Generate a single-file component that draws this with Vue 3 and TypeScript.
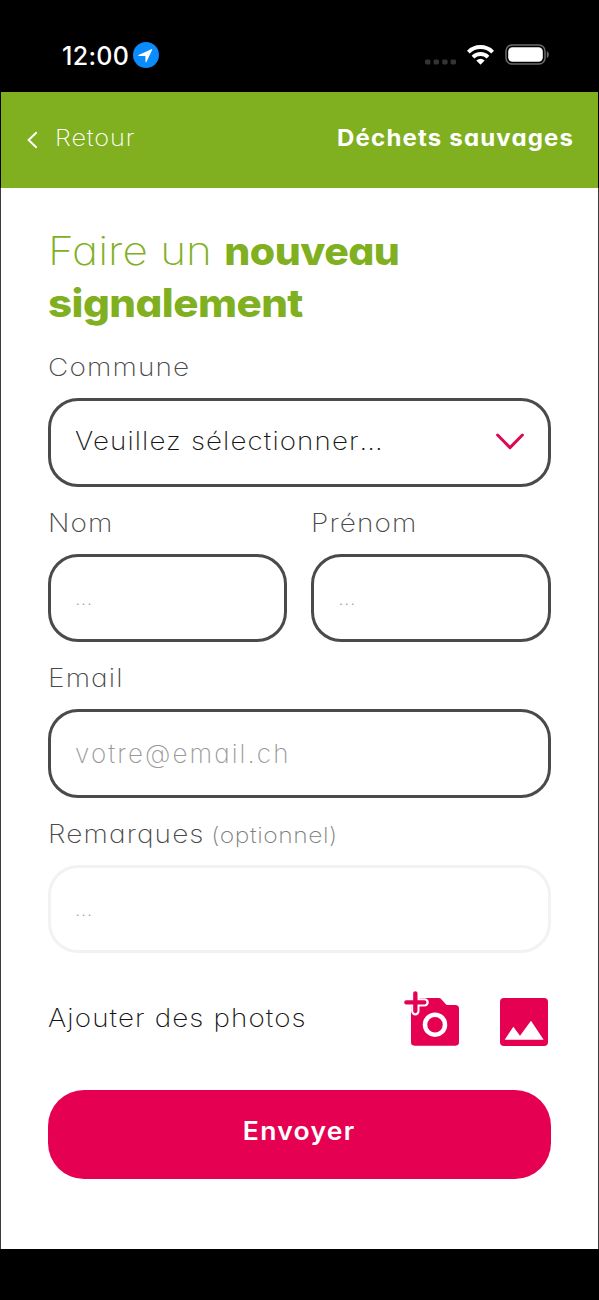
<script setup lang="ts">
import { reactive } from 'vue'

const form = reactive({ lastName: '', firstName: '', email: '', remarks: '' })
</script>

<template>
  <div class="screen">
    <div class="status">
      <span class="time">12:00</span>
      <svg class="location" viewBox="0 0 26 26">
        <circle cx="13" cy="13" r="13" fill="#0a8cff" />
        <path d="M5.6 13.1 L18.4 7.2 Q19.6 6.8 19.1 8 L13.4 20 Q12.7 20.9 12.5 19.8 L12.4 14.1 L6 14 Q4.6 13.7 5.6 13.1Z" fill="#fff" />
      </svg>
      <span class="spacer"></span>
      <svg class="signal" viewBox="0 0 31 6">
        <rect x="0" y=".5" width="5.4" height="5" rx="1.4" />
        <rect x="8.6" y=".5" width="5.4" height="5" rx="1.4" />
        <rect x="17.2" y=".5" width="5.4" height="5" rx="1.4" />
        <rect x="25.6" y=".5" width="5.4" height="5" rx="1.4" />
      </svg>
      <svg class="wifi" viewBox="0 0 27 20">
        <path d="M1.4 7.1 A17.2 17.2 0 0 1 25.6 7.1" />
        <path d="M6 12.1 A10.8 10.8 0 0 1 21 12.1" />
        <path class="wifi-dot" d="M9.3 15.6 Q13.5 11.9 17.7 15.6 L14 19.3 Q13.5 19.8 13 19.3Z" />
      </svg>
      <svg class="battery" viewBox="0 0 44 22">
        <rect x="1" y="1" width="39" height="19" rx="6" fill="none" stroke="#6a6a6a" stroke-width="1.5" />
        <rect x="3.2" y="3.2" width="34.6" height="14.6" rx="4.2" fill="#fff" />
        <path d="M41.8 7 Q43.8 8 43.8 10.5 T41.8 14Z" fill="#6a6a6a" />
      </svg>
    </div>

    <header class="header">
      <a class="back">
        <svg viewBox="0 0 12 18"><path d="M9.7 1.2 L1.6 9 L9.7 16.8" /></svg>
        <span class="back-label">Retour</span>
      </a>
      <span class="title">Déchets sauvages</span>
    </header>

    <main class="content">
      <h1>Faire un <b>nouveau</b><br /><b class="second">signalement</b></h1>

      <div class="field">
        <label>Commune</label>
        <div class="box select">
          <span class="wide">Veuillez sélectionner<span class="ellipsis">...</span></span>
          <svg viewBox="0 0 28 17"><path d="M1.6 2 L14 14.6 L26.4 2" /></svg>
        </div>
      </div>

      <div class="row">
        <div class="field">
          <label>Nom</label>
          <input v-model="form.lastName" class="box dots" placeholder="..." />
        </div>
        <div class="field">
          <label>Prénom</label>
          <input v-model="form.firstName" class="box dots" placeholder="..." />
        </div>
      </div>

      <div class="field">
        <label>Email</label>
        <input v-model="form.email" class="box email" placeholder="votre@email.ch" />
      </div>

      <div class="field">
        <label>Remarques<small>(optionnel)</small></label>
        <input v-model="form.remarks" class="box dots faint" placeholder="..." />
      </div>

      <div class="photos">
        <span class="photos-label">Ajouter des photos</span>
        <svg class="camera" viewBox="72 60 168 171">
          <path d="M93 97 V217 Q93 227 103 227 H227 Q237 227 237 217 V116 Q237 105 226 105 H203 Q199 105 196 101 L184 88 Q181 84 176 84 H106Z" fill="#e50051" />
          <path d="M106 70 V124 M79 97 H134" fill="none" stroke="#fff" stroke-width="25" stroke-linecap="round" />
          <path d="M106 70 V123 M79 97 H133" fill="none" stroke="#e50051" stroke-width="13" stroke-linecap="round" />
          <circle cx="165" cy="164" r="30" fill="none" stroke="#fff" stroke-width="13.5" />
        </svg>
        <svg class="picture" viewBox="0 0 144 144">
          <rect width="144" height="144" rx="12" fill="#e50051" />
          <path d="M14 125 L40 86 L60 113 L93 68 L131 125Z" fill="#fff" />
        </svg>
      </div>

      <button class="send"><span>Envoyer</span></button>
    </main>
  </div>
</template>

<style>
body {
  margin: 0;
  background: #000;
}
</style>

<style scoped>
.screen {
  width: 599px;
  height: 1300px;
  box-sizing: border-box;
  overflow: hidden;
  background: #000;
  color: #151515;
  font-family: Inter, 'Open Sans', sans-serif;
  font-weight: 200;
  font-size: 25px;
  font-feature-settings: 'cv11';
}
.screen * {
  box-sizing: border-box;
}
svg {
  display: block;
  flex: none;
}
.status {
  height: 92px;
  padding: 18px 50px 0 62px;
  display: flex;
  align-items: center;
  color: #fff;
}
.time {
  width: 71px;
  padding-top: 1px;
  font-size: 25px;
  font-weight: 500;
  letter-spacing: 0.3px;
}
.location {
  width: 26px;
  height: 26px;
}
.spacer {
  flex: 1;
}
.signal {
  width: 31px;
  height: 6px;
  margin: 13px 11px 0 0;
  fill: #343434;
}
.wifi {
  width: 27px;
  height: 20px;
  margin-right: 11.5px;
  fill: none;
  stroke: #fff;
  stroke-width: 4;
}
.wifi .wifi-dot {
  fill: #fff;
  stroke: none;
}
.battery {
  width: 44px;
  height: 22px;
}
.header {
  height: 95.5px;
  margin: 0 1px;
  padding: 0 24px 4px 25px;
  display: flex;
  align-items: center;
  justify-content: space-between;
  background: #80b01f;
  color: #fff;
}
.back {
  display: flex;
  align-items: center;
  font-size: 23px;
  letter-spacing: 0.8px;
}
.back svg {
  width: 12px;
  height: 18px;
  margin: 5px 16px 0 0.5px;
  fill: none;
  stroke: #fff;
  stroke-width: 2;
}
.back-label {
  display: inline-block;
  transform: scaleX(1.1);
  transform-origin: left;
}
.title {
  font-weight: 700;
  font-size: 22.5px;
  letter-spacing: 1.1px;
  transform: scaleX(1.067);
  transform-origin: right;
}
.content {
  height: 1061.5px;
  padding: 37.5px 47.5px 0 47px;
  border: solid #3c3c3c;
  border-width: 0 1px;
  background: #fff;
}
h1 {
  margin: 0 0 21px;
  font-size: 39px;
  line-height: 52px;
  font-weight: 200;
  color: #80b01f;
  white-space: nowrap;
  transform: scaleX(1.13);
  transform-origin: left;
}
h1 b {
  display: inline-block;
  font-weight: 800;
  letter-spacing: -0.5px;
  transform: scaleX(0.93);
  transform-origin: left;
}
h1 .second {
  transform: scaleX(0.955);
}
.field {
  flex: 1;
  min-width: 0;
  margin-bottom: 19px;
}
.row {
  display: flex;
  gap: 24px;
}
label {
  display: block;
  height: 32px;
  margin-bottom: 16px;
  padding-top: 1px;
  line-height: 32px;
  letter-spacing: 1px;
  color: #4a4a4a;
  white-space: nowrap;
  transform: scaleX(1.12);
  transform-origin: left;
}
label small {
  margin-left: 6px;
  font-size: 22px;
  letter-spacing: 0.5px;
  color: #808080;
}
.box {
  display: block;
  width: 100%;
  height: 88.6px;
  padding: 0 24px;
  border: 3px solid #4a4a4a;
  border-radius: 30px;
  outline: none;
  background: transparent;
  font: inherit;
  font-feature-settings: inherit;
  letter-spacing: 1px;
  color: #151515;
}
.box::placeholder {
  color: #999;
  opacity: 1;
}
.email {
  font-size: 26px;
  letter-spacing: 2.1px;
}
.dots {
  font-size: 20px;
  letter-spacing: 0.3px;
}
.faint {
  border-color: #f2f2f2;
}
.select {
  display: flex;
  align-items: center;
  justify-content: space-between;
  padding-bottom: 2px;
}
.wide {
  display: inline-block;
  transform: scaleX(1.11);
  transform-origin: left;
}
.ellipsis {
  letter-spacing: 0;
}
.select svg {
  width: 28px;
  height: 17px;
  fill: none;
  stroke: #dc0a55;
  stroke-width: 3;
  stroke-linecap: round;
  stroke-linejoin: round;
}
.photos {
  display: flex;
  height: 118px;
  align-items: flex-start;
  padding: 18px 2.5px 0 0;
}
.photos-label {
  line-height: 32px;
  margin: 12px auto 0 0;
  letter-spacing: 1px;
  white-space: nowrap;
  transform: scaleX(1.112);
  transform-origin: left;
}
.camera {
  width: 56px;
  height: 57px;
}
.picture {
  width: 48px;
  height: 48px;
  margin: 8px 0 0 40px;
}
.send {
  display: block;
  width: 100%;
  height: 89px;
  padding: 0 0 8px;
  border: 0;
  border-radius: 36px;
  background: #e50051;
  color: #fff;
  font: inherit;
  font-weight: 600;
  letter-spacing: 1.2px;
}
.send span {
  display: inline-block;
  transform: scaleX(1.06);
}
</style>
